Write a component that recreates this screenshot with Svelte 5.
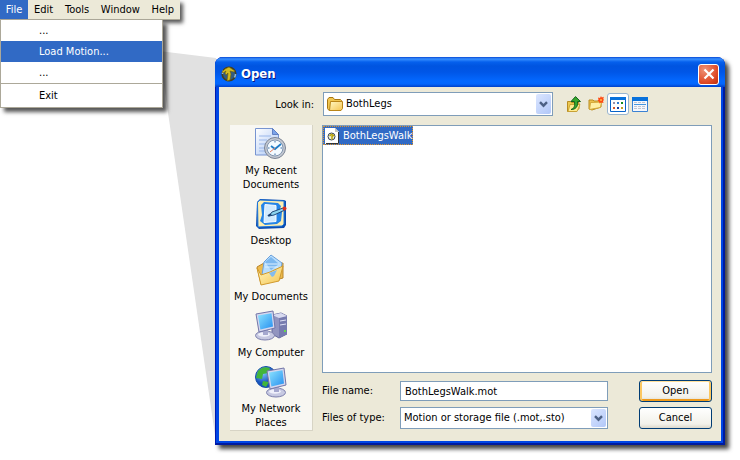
<script>
  const menus = ['File', 'Edit', 'Tools', 'Window', 'Help'];
  const places = [
    { id: 'recent', label: 'My Recent Documents' },
    { id: 'desktop', label: 'Desktop' },
    { id: 'documents', label: 'My Documents' },
    { id: 'computer', label: 'My Computer' },
    { id: 'network', label: 'My Network Places' }
  ];
  let fileName = $state('BothLegsWalk.mot');
</script>

{#snippet arrow()}
  <span class="arrow" aria-hidden="true">
    <svg width="9" height="7" viewBox="0 0 9 7"><path d="M1 1.2 4.5 4.7 8 1.2" fill="none" stroke="#4d6185" stroke-width="2.4" /></svg>
  </span>
{/snippet}

{#snippet monitor()}
  <ellipse cx="10" cy="25.5" rx="9.5" ry="4.5" fill="#c7c9e2" stroke="#7d80ad" />
  <ellipse cx="9" cy="24.5" rx="6" ry="2.2" fill="#eff0fb" />
  <path d="M8 19h5v6H8z" fill="#a5a8cf" />
  <path d="M1 4 18 1l2 17-16 4z" fill="#d5d7ee" stroke="#7376a8" />
  <path d="M3 5.6 16.5 3.3 18 16.5 5.4 19.5z" fill="url(#screen)" />
{/snippet}

<div class="scene">
  <svg class="beam" viewBox="0 0 216 460" width="216" height="460" aria-hidden="true">
    <path d="M159 51 216 58V442Z" fill="#e1e1e1" />
  </svg>

  <nav class="menu" aria-label="Application menu">
    <div class="bar">
      {#each menus as name}
        <button class:active={name === 'File'}>{name}</button>
      {/each}
    </div>
    <div class="dropdown">
      <button>...</button>
      <button class="active">Load Motion...</button>
      <button>...</button>
      <hr />
      <button class="last">Exit</button>
    </div>
  </nav>

  <section class="dialog" aria-labelledby="title">
    <header>
      <svg width="16" height="16" viewBox="0 0 16 16" aria-hidden="true">
        <circle cx="8" cy="8" r="6.8" fill="#315c82" stroke="#443f1c" stroke-width="1.6" />
        <path d="M1.500 8a6.500 6.500 0 0 1 1-3.500M14.500 8a6.500 6.500 0 0 1-1 3.500" stroke="#8db6d6" stroke-width="1.600" fill="none" />
        <path d="M1 6 4 3l4-2 3 2 3 2-1 1-4-1 1 3-1 6-3 1 1-8-2 2-1-2 1-2-3 2z" fill="#d3bd22" stroke="#6b5d10" stroke-width=".6" />
      </svg>
      <h1 id="title">Open</h1>
      <button class="close" aria-label="Close">
        <svg width="12" height="12" viewBox="0 0 12 12"><path d="m1.500 1.500 9 9m0-9-9 9" stroke="#fff" stroke-width="2.200" /></svg>
      </button>
    </header>

    <form class="body" onsubmit={(e) => e.preventDefault()}>
      <div class="lookin">
        <label for="folder">Look in:</label>
        <div class="combo">
          <svg class="folder" width="16" height="14" viewBox="0 0 16 14" aria-hidden="true">
            <path d="M.5 11.500v-9l1.500-2h4l1.500 2h6l1 1v8l-1.500 2h-11z" fill="#f0c650" stroke="#a87712" />
            <path d="M3.500 4.500h12v7l-1.500 2H2.500z" fill="url(#fold)" stroke="#b98518" />
          </svg>
          <select id="folder"><option>BothLegs</option></select>
          {@render arrow()}
        </div>
        <div class="tools">
          <button type="button" aria-label="Up one level">
            <svg width="16" height="16" viewBox="0 0 16 16">
              <path d="M1.500 5.500h3l1 1h7.500v6l-3 3h-8.500z" fill="#ecc84f" stroke="#b98c22" />
              <path d="m2 15.500 2-7h10l-3 7z" fill="#ffeb8f" stroke="#c39a2c" stroke-width=".8" />
              <path d="M5 13.500c3.500-1 4-4 3.500-8H5L9.500.600l5 4.900h-3c.5 5-1.500 8-6.500 8z" fill="#37a82d" stroke="#12621a" />
            </svg>
          </button>
          <button type="button" aria-label="Create new folder">
            <svg width="16" height="16" viewBox="0 0 16 16">
              <path d="M1 4h4l1 1h7v6l-9 3-3-1z" fill="#edc34f" stroke="#b98c22" />
              <path d="m1.500 13.500 1-7 11-.5-1 5.500z" fill="#fff0a4" stroke="#d2a737" />
              <path d="m13 0 .8 1.500 2-.8-.5 2.300.7 1-1 1 .5 2-2.500-.500-1.500 1-.5-2-1.500-.800 1-1-.500-2.200 2 .5z" fill="#ff4a12" />
              <path d="M12 3h2v2h-2z" fill="#ff9c3c" />
            </svg>
          </button>
          <button type="button" class="pressed" aria-label="List view">
            <svg width="16" height="15" viewBox="0 0 16 15">
              <path d="M.5.500h15v14H.5z" fill="#fff" stroke="#0763ca" /><path d="M0 0h16v3H0z" fill="#0871dc" />
              <path d="M3 5h2v2H3z" fill="#9a90a8" /><path d="M7 5h2v2H7z" fill="#2f7dd3" /><path d="M11 5h2v2h-2z" fill="#148b23" />
              <path d="M3 10h2v2H3z" fill="#d9572c" /><path d="M7 10h2v2H7z" fill="#173fa2" /><path d="M11 10h2v2h-2z" fill="#c3a02b" />
            </svg>
          </button>
          <button type="button" aria-label="Details view">
            <svg width="16" height="15" viewBox="0 0 16 15">
              <path d="M.5.500h15v14H.5z" fill="#f5f7fc" stroke="#3b82d3" /><path d="M0 0h16v4H0z" fill="#0871dc" />
              <path d="M2 7.500h12" stroke="#4395df" /><path d="M2 5.500h12M2 9.500h12M2 11.500h12" stroke="#c0c5d2" stroke-dasharray="3 1" />
            </svg>
          </button>
        </div>
      </div>

      <div class="columns">
        <div class="places">
          {#each places as place}
            <button type="button">
              <svg width="32" height="32" viewBox="0 0 32 32" aria-hidden="true">
                {#if place.id === 'recent'}
                  <path d="M.5.500h17l6 6V27H.5z" fill="url(#paper)" stroke="#7794d1" />
                  <path d="m17.500.500 6 6h-6z" fill="#7ba3e9" stroke="#5f80c4" />
                  <path d="M4 8h12M4 12h8M4 16h6M4 20h6M4 23h7" stroke="#9ab7ea" />
                  <circle cx="20" cy="20" r="10.500" fill="#c3c8d2" stroke="#7c8595" />
                  <circle cx="20" cy="20" r="8" fill="#f3faff" stroke="#8295ae" />
                  <path d="M20 13v1.500M20 25.500V27M13 20h1.500M25.500 20H27" stroke="#3b6da5" />
                  <path d="m16 18 4 3 6-5" fill="none" stroke="#207cc6" stroke-width="1.800" />
                  <path d="m20 20-5 4" stroke="#e57c5b" />
                {:else if place.id === 'desktop'}
                  <path d="M2 4 5 1l24 1 2 1v24l-2 3-25 1-3-3z" fill="#0b4db1" />
                  <path d="M2.500 4.500 5 2l24 1v23l-2 2-24 1z" fill="#ffefb0" stroke="#1b75dc" />
                  <path d="m6 7 3-3 14 1 3 3-1 3 2 3-1 9-4 3-12 1-5-4 2-6z" fill="#2485e8" />
                  <path d="M10 6.500 21 7.500v16l-12 1z" fill="#cfeaff" stroke="#f7fcff" />
                  <path d="m14 18 3-4 11-4 2 2-11 5z" fill="#8bd4ef" stroke="#214a7a" />
                  <circle cx="29.500" cy="10.500" r="2" fill="#d7301f" />
                  <path d="m13 18 3-2" stroke="#194071" stroke-width="2" />
                {:else if place.id === 'documents'}
                  <path d="m2 13 7-4 3 2 16-2v15L6 30z" fill="#eebb4c" stroke="#b98428" />
                  <path d="m16 1 11 8-2 14-18-2 2-13z" fill="#b9defc" stroke="#6aa0db" />
                  <path d="m10 8 6-5 8 7-8 6z" fill="#7cb8ef" /><path d="M10 10h14M10 13h13" stroke="#dff1ff" />
                  <path d="m2 14 4 7 9-3 13-6-4 15-18 4z" fill="url(#fold)" stroke="#d19a2d" />
                  <path d="m14 19 8-3-3 6-2 1z" fill="#84bced" />
                {:else if place.id === 'computer'}
                  <path d="m17 5 9-2 6 3v18l-8 4-7-4z" fill="#9194bf" stroke="#63679b" />
                  <path d="m24 8 8-2v18l-8 4z" fill="#777baf" /><path d="m17 5 9-2 6 3-8 2z" fill="#d8daf0" />
                  <path d="m25 11 6-1M25 15l6-1" stroke="#dfe1f6" /><path d="M29 20h2v2h-2z" fill="#64db4a" />
                  {@render monitor()}
                {:else}
                  <circle cx="11" cy="11" r="10.500" fill="url(#globe)" stroke="#164fa8" />
                  <path d="M3 5c5-5 8-4 12-3l-2 5-5 1-1 5-6-1zM8 15l6 1-3 5-4-2z" fill="#43b53a" />
                  <g transform="translate(11 1)">{@render monitor()}</g>
                {/if}
              </svg>
              <span>{place.label}</span>
            </button>
          {/each}
        </div>

        <div class="content">
          <ul class="files">
            <li>
              <button type="button">
                <svg width="14" height="16" viewBox="0 0 14 16" aria-hidden="true">
                  <path d="M0 0h10l4 4v12H0z" fill="#fff" /><path d="M10 0v4h4z" fill="#c6c6bd" /><path d="M13.500 4v11.500H1" fill="none" stroke="#333" />
                  <circle cx="6.500" cy="8.500" r="3.500" fill="#f0f1d8" stroke="#344158" /><path d="m4.500 8 2-1.500 2 1-1.500 1v3" fill="none" stroke="#b8a30b" stroke-width="1.500" />
                </svg>
                <span>BothLegsWalk</span>
              </button>
            </li>
          </ul>
          <div class="fields">
            <label for="name">File name:</label>
            <input id="name" bind:value={fileName} />
            <button class="push primary">Open</button>
            <label for="type">Files of type:</label>
            <div class="combo">
              <select id="type"><option>Motion or storage file (.mot,.sto)</option></select>
              {@render arrow()}
            </div>
            <button type="button" class="push">Cancel</button>
          </div>
        </div>
      </div>
    </form>
  </section>

  <svg class="defs" width="0" height="0" aria-hidden="true">
    <defs>
      <linearGradient id="fold" x2="1" y2="1"><stop stop-color="#fff8c4" /><stop offset="1" stop-color="#f5c551" /></linearGradient>
      <linearGradient id="screen" x2="1" y2="1"><stop stop-color="#8de4ff" /><stop offset="1" stop-color="#268ff0" /></linearGradient>
      <linearGradient id="paper" x2="1" y2="1"><stop stop-color="#fff" /><stop offset="1" stop-color="#a9c5f5" /></linearGradient>
      <radialGradient id="globe" cx=".35" cy=".3"><stop stop-color="#85c8ff" /><stop offset="1" stop-color="#1552bd" /></radialGradient>
    </defs>
  </svg>
</div>

<style>
  :global(body) { margin: 0; background: #fff; }
  .scene {
    position: relative;
    display: flex;
    align-items: flex-start;
    gap: 35px;
    padding-right: 15px;
    padding-bottom: 16px;
    font: 11px/14px "DejaVu Sans Condensed", Tahoma, "Noto Sans", sans-serif;
    color: #000;
  }
  .scene * { box-sizing: border-box; }
  button, select, input { font: inherit; color: inherit; margin: 0; padding: 0; border: 0; background: none; }
  svg { display: block; flex: none; }
  .beam { position: absolute; left: 0; top: 0; }
  .defs { position: absolute; }

  .menu { position: relative; flex: 0 0 180px; }
  .bar { display: flex; background: #ece9d8; border-bottom: 1px solid #aca899; box-shadow: 3px 3px 4px #000a; }
  .bar button { flex: 1 1 auto; height: 19px; padding: 0 5px; }
  .dropdown { position: relative; width: 163px; background: #fff; border: 1px solid #aca899; border-top: 0; box-shadow: 4px 4px 4px #000a; }
  .dropdown button { display: block; width: 100%; height: 21px; padding-left: 38px; text-align: left; }
  .dropdown .last { height: 23px; }
  .dropdown hr { height: 1px; margin: 0; border: 0; background: #aca899; }
  .menu .active { background: #316ac5; color: #fff; }

  .dialog {
    position: relative;
    flex: 1;
    min-width: 0;
    margin-top: 57px;
    padding: 0 4px 4px;
    border-radius: 8px 8px 0 0;
    background: #0046e5;
    box-shadow: inset 1px 0 #0019b0, inset -2px -2px #001b9f, 4px 4px 4px #000b;
  }
  header {
    display: flex;
    align-items: center;
    gap: 4px;
    height: 30px;
    margin: 0 -4px;
    padding: 4px 6px 0;
    border-radius: 8px 8px 0 0;
    background: linear-gradient(#0849d4 0, #3990ff 2px, #0560ed 5px, #0054e0 9px, #0056e7 15px, #0368ff 24px, #0366fc 27px, #0040c8 30px);
  }
  h1 { flex: 1; margin: 0; font: bold 13px/16px "DejaVu Sans Condensed", "Trebuchet MS", sans-serif; color: #fff; text-shadow: 1px 1px #0a1883; }
  .close { display: grid; place-items: center; width: 21px; height: 21px; border: 1px solid #fff; border-radius: 3px; background: radial-gradient(circle at 30% 25%, #ee9277, #df4a27 65%, #bb2c0b); }

  .body { padding: 5px 9px 10px 11px; background: #ece9d8; }
  .lookin { display: flex; align-items: center; gap: 10px; }
  .lookin > label { width: 84px; padding-top: 1px; text-align: right; }
  .lookin .combo { flex: 1; margin-left: -1px; }
  .combo { display: flex; align-items: center; height: 24px; padding: 1px; border: 1px solid #7f9db9; background: #fff; }
  .folder { margin: 0 3px 0 2px; }
  select { flex: 1; min-width: 0; height: 100%; appearance: none; outline: 0; }
  .arrow { display: grid; place-items: center; width: 15px; height: 100%; border-radius: 2px; background: linear-gradient(135deg, #dbe6ff, #b1c7f8); pointer-events: none; }
  .tools { display: flex; align-items: center; flex: 0 0 149px; }
  .tools button { display: grid; place-items: center; width: 22px; height: 22px; }
  .tools .pressed { border: 1px solid #98b5cf; border-radius: 3px; background: #fff; }

  .columns { display: flex; gap: 9px; margin-top: 9px; }
  .places { display: flex; flex-direction: column; gap: 6px; flex: 0 0 83px; padding-top: 3px; border-right: 1px solid #d7d4c5; border-bottom: 1px solid #d7d4c5; background: #f8f7f2; }
  .places button { display: flex; flex-direction: column; align-items: center; gap: 4px; padding: 0 4px; }
  .content { display: flex; flex-direction: column; flex: 1; min-width: 0; }
  .files { flex: 1; margin: 0; padding: 0; border: 1px solid #7f9db9; background: #fff; list-style: none; }
  .files button { display: flex; align-items: center; gap: 4px; height: 19px; padding: 0 0 0 1px; border: 1px dotted #e0952f; background: #316ac5; color: #fff; }
  .fields { display: grid; grid-template-columns: 78px minmax(0, 1fr) 73px; row-gap: 5px; align-items: center; margin: 7px 0 2px; }
  .fields input, .fields .combo { margin-right: 31px; }
  .fields input { height: 20px; padding: 0 4px; border: 1px solid #7f9db9; background: #fff; outline: 0; }
  .fields .combo { height: 22px; padding-left: 3px; }
  .push { height: 22px; border: 1px solid #003c74; border-radius: 3px; background: linear-gradient(#fff, #f2f1ea 80%, #dcd8cb); }
  .primary { box-shadow: inset 0 1px #ffdf9a, inset 2px 0 #fbc761, inset -2px 0 #fbc761, inset 0 -2px #ee9a1b; }
</style>
